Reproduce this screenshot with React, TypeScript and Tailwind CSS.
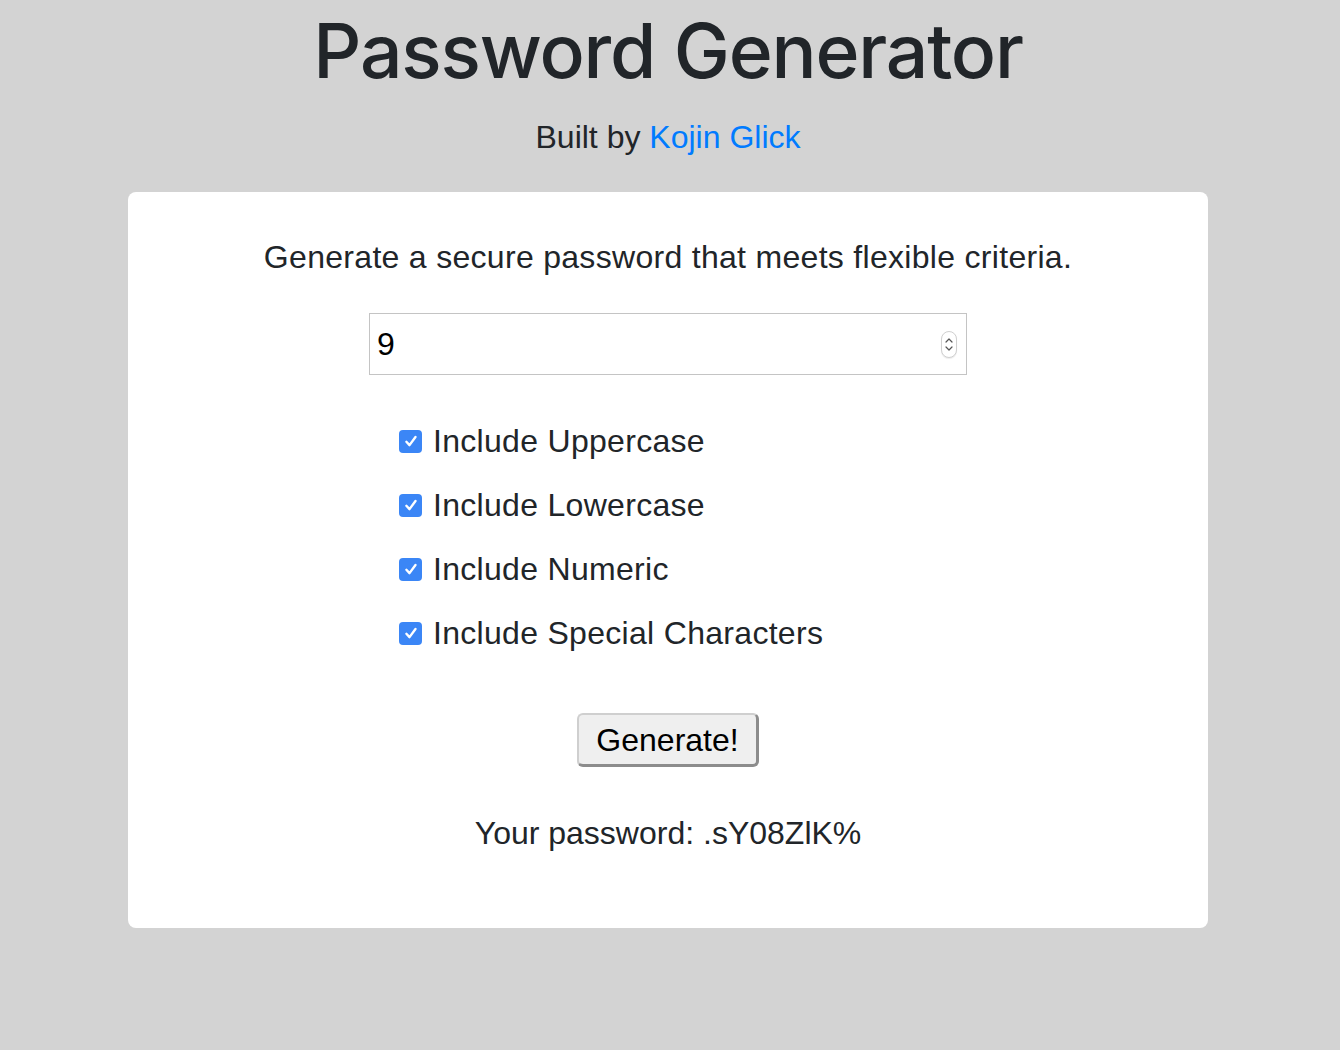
import { useState } from 'react';

const options = [
    'Include Uppercase',
    'Include Lowercase',
    'Include Numeric',
    'Include Special Characters',
];

function CheckBox() {
    return (
        <span className="flex h-[23px] w-[23px] shrink-0 items-center justify-center rounded-[4px] bg-[#3b86f6]">
            <svg width="20" height="20" viewBox="0 0 16 16" fill="none">
                <path d="M4.3 8.6 L6.8 11.3 L11.6 4.8" stroke="white" strokeWidth="1.9" strokeLinecap="round" strokeLinejoin="round" />
            </svg>
        </span>
    );
}

function Spinner() {
    return (
        <span className="flex h-[27px] w-[16px] flex-col items-center justify-center gap-[3px] rounded-full border border-[#d0d0d0] bg-white shadow-[0_1px_1px_rgba(0,0,0,0.08)]">
            <svg width="8" height="5" viewBox="0 0 8 5" fill="none">
                <path d="M1 4 L4 1 L7 4" stroke="#555" strokeWidth="1.2" strokeLinecap="round" strokeLinejoin="round" />
            </svg>
            <svg width="8" height="5" viewBox="0 0 8 5" fill="none">
                <path d="M1 1 L4 4 L7 1" stroke="#555" strokeWidth="1.2" strokeLinecap="round" strokeLinejoin="round" />
            </svg>
        </span>
    );
}

export default function App() {
    const [length] = useState(9);
    const [password] = useState('.sY08ZlK%');

    return (
        <div className="min-h-[1050px] bg-[#d3d3d3] pr-[4px] font-['Liberation_Sans',Arial,sans-serif] text-[#212529]">
            {/* Header */}
            <h1 className="pt-[5px] text-center font-['Inter',sans-serif] text-[75px] font-medium leading-[92px] tracking-[-1.2px]">
                Password Generator
            </h1>
            <p className="mt-[20px] text-center text-[32px] leading-[40px]">
                Built by <a className="text-[#007bff]" href="#">Kojin Glick</a>
            </p>

            {/* Card */}
            <div className="mx-auto mt-[35px] flex w-[1080px] flex-col items-center rounded-[8px] bg-white pb-[75px] pt-[45px]">
                <p className="text-[32px] leading-[40px] tracking-[0.3px]">
                    Generate a secure password that meets flexible criteria.
                </p>

                <div className="mt-[36px] flex h-[62px] w-[598px] items-center justify-between border border-[#c4c4c4] pl-[7px] pr-[9px]">
                    <span className="text-[32px] leading-[40px] text-black">{length}</span>
                    <Spinner />
                </div>

                <div className="mt-[46px] flex w-[598px] flex-col gap-[24px] pl-[30px]">
                    {options.map((o) => (
                        <label key={o} className="flex h-[40px] items-center gap-[11px] text-[32px] leading-[40px] tracking-[0.3px]">
                            <CheckBox />
                            <span>{o}</span>
                        </label>
                    ))}
                </div>

                <button className="mt-[60px] h-[54px] w-[182px] rounded-[6px] border-2 border-b-[3px] border-r-[3px] border-t-[#cfcfcf] border-l-[#cfcfcf] border-r-[#8c8c8c] border-b-[#8c8c8c] bg-[#efefef] text-[32px] leading-[40px] text-black">
                    Generate!
                </button>

                <p className="mt-[46px] text-[32px] leading-[40px]">Your password: {password}</p>
            </div>
        </div>
    );
}
